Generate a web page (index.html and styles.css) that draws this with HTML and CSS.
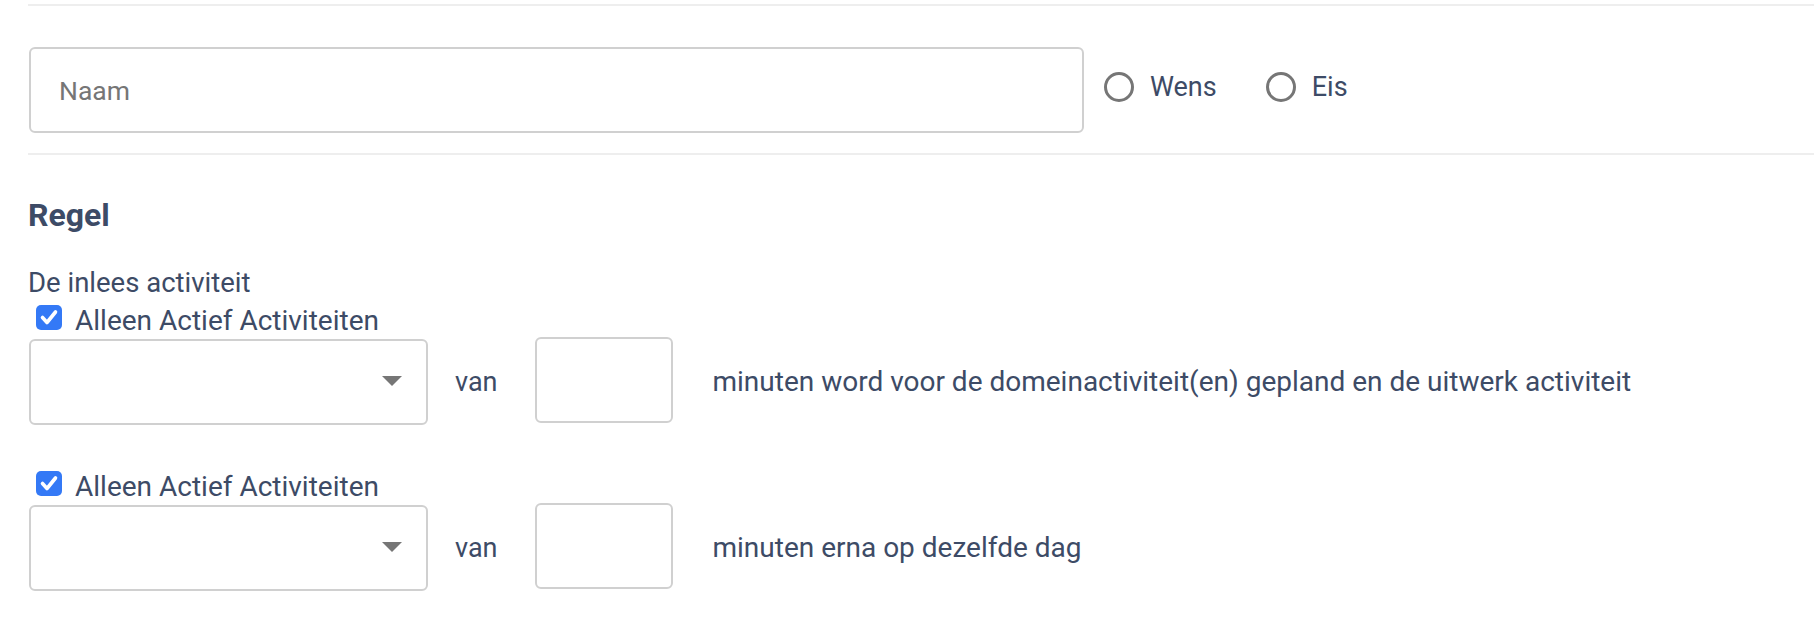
FILE: index.html
```html
<!DOCTYPE html>
<html lang="nl">
<head>
<meta charset="utf-8">
<title>Regel</title>
<link rel="stylesheet" href="styles.css">
</head>
<body>
<div class="page">
  <div class="rule rule-top"></div>
  <div class="name-row">
    <input class="name-input" type="text" placeholder="Naam">
    <label class="radio-opt"><input type="radio" name="type" class="radio"><span>Wens</span></label>
    <label class="radio-opt radio-opt-2"><input type="radio" name="type" class="radio"><span>Eis</span></label>
  </div>
  <div class="rule rule-mid"></div>
  <h2 class="title">Regel</h2>
  <div class="intro">De inlees activiteit</div>
  <label class="check-row">
    <span class="cb"><svg viewBox="0 0 26 25" width="26" height="25"><path d="M6.5 12.5 L11 17.5 L19.5 7" stroke="#fff" stroke-width="3.6" fill="none" stroke-linecap="round" stroke-linejoin="round"/></svg></span>
    <span>Alleen Actief Activiteiten</span>
  </label>
  <div class="field-row">
    <div class="select"><span class="caret"></span></div>
    <span class="van">van</span>
    <input class="num" type="text">
    <span class="desc">minuten word voor de domeinactiviteit(en) gepland en de uitwerk activiteit</span>
  </div>
  <label class="check-row check-row-2">
    <span class="cb"><svg viewBox="0 0 26 25" width="26" height="25"><path d="M6.5 12.5 L11 17.5 L19.5 7" stroke="#fff" stroke-width="3.6" fill="none" stroke-linecap="round" stroke-linejoin="round"/></svg></span>
    <span>Alleen Actief Activiteiten</span>
  </label>
  <div class="field-row">
    <div class="select"><span class="caret"></span></div>
    <span class="van">van</span>
    <input class="num" type="text">
    <span class="desc">minuten erna op dezelfde dag</span>
  </div>
</div>
</body>
</html>
```

FILE: styles.css
```css
* { box-sizing: border-box; }
html, body { margin: 0; padding: 0; background: #fff; }
body {
  font-family: Roboto, "Liberation Sans", Arial, sans-serif;
  font-size: 27px;
  color: #3d4b66;
}
.page {
  padding-left: 28px;
}
.rule {
  height: 2px;
  background: #eeeeee;
}
.rule-top { margin-top: 4px; }
.name-row {
  display: flex;
  align-items: center;
  margin-top: 41px;
  height: 86px;
}
.name-input {
  width: 1055px;
  height: 86px;
  border: 2px solid #d0d0d0;
  border-radius: 6px;
  padding: 0 0 0 28px;
  font-family: inherit;
  font-size: 26.5px;
  color: #3d4b66;
  outline: none;
  margin-left: 1px;
}
.name-input::placeholder { color: #767676; }
.radio-opt {
  display: flex;
  align-items: center;
  margin-left: 20px;
  margin-bottom: 6px;
  line-height: 36px;
}
.radio-opt-2 { margin-left: 49px; }
.radio {
  appearance: none;
  -webkit-appearance: none;
  width: 30px;
  height: 30px;
  margin: 0 16px 0 0;
  border: 3.5px solid #767676;
  border-radius: 50%;
  background: #fff;
}
.rule-mid { margin-top: 20px; }
.title {
  margin: 41px 0 0 0;
  font-size: 32px;
  line-height: 38px;
  font-weight: 700;
}
.intro {
  margin-top: 31px;
  font-size: 27.5px;
  line-height: 36px;
}
.check-row {
  display: flex;
  align-items: flex-start;
  margin-top: 2px;
  font-size: 28px;
  line-height: 36px;
}
.check-row-2 { margin-top: 44px; }
.cb {
  display: block;
  flex: none;
  width: 26px;
  height: 25px;
  margin: 2px 13px 0 8px;
  background: #3479f6;
  border-radius: 5px;
}
.cb svg { display: block; }
.field-row {
  display: flex;
  align-items: center;
  height: 86px;
}
.select {
  width: 399px;
  height: 86px;
  border: 2px solid #d0d0d0;
  border-radius: 6px;
  display: flex;
  align-items: center;
  justify-content: flex-end;
  padding-right: 24px;
  margin-left: 1px;
}
.caret {
  width: 0;
  height: 0;
  border-left: 10px solid transparent;
  border-right: 10px solid transparent;
  border-top: 10px solid #767676;
  margin-top: -2px;
}
.van {
  margin-left: 27px;
  line-height: 36px;
}
.num {
  width: 138px;
  height: 86px;
  border: 2px solid #d0d0d0;
  border-radius: 6px;
  margin: 0 0 4px 38px;
  outline: none;
  font-family: inherit;
  font-size: 27px;
}
.desc {
  margin-left: 39px;
  font-size: 28px;
  line-height: 36px;
}
```
